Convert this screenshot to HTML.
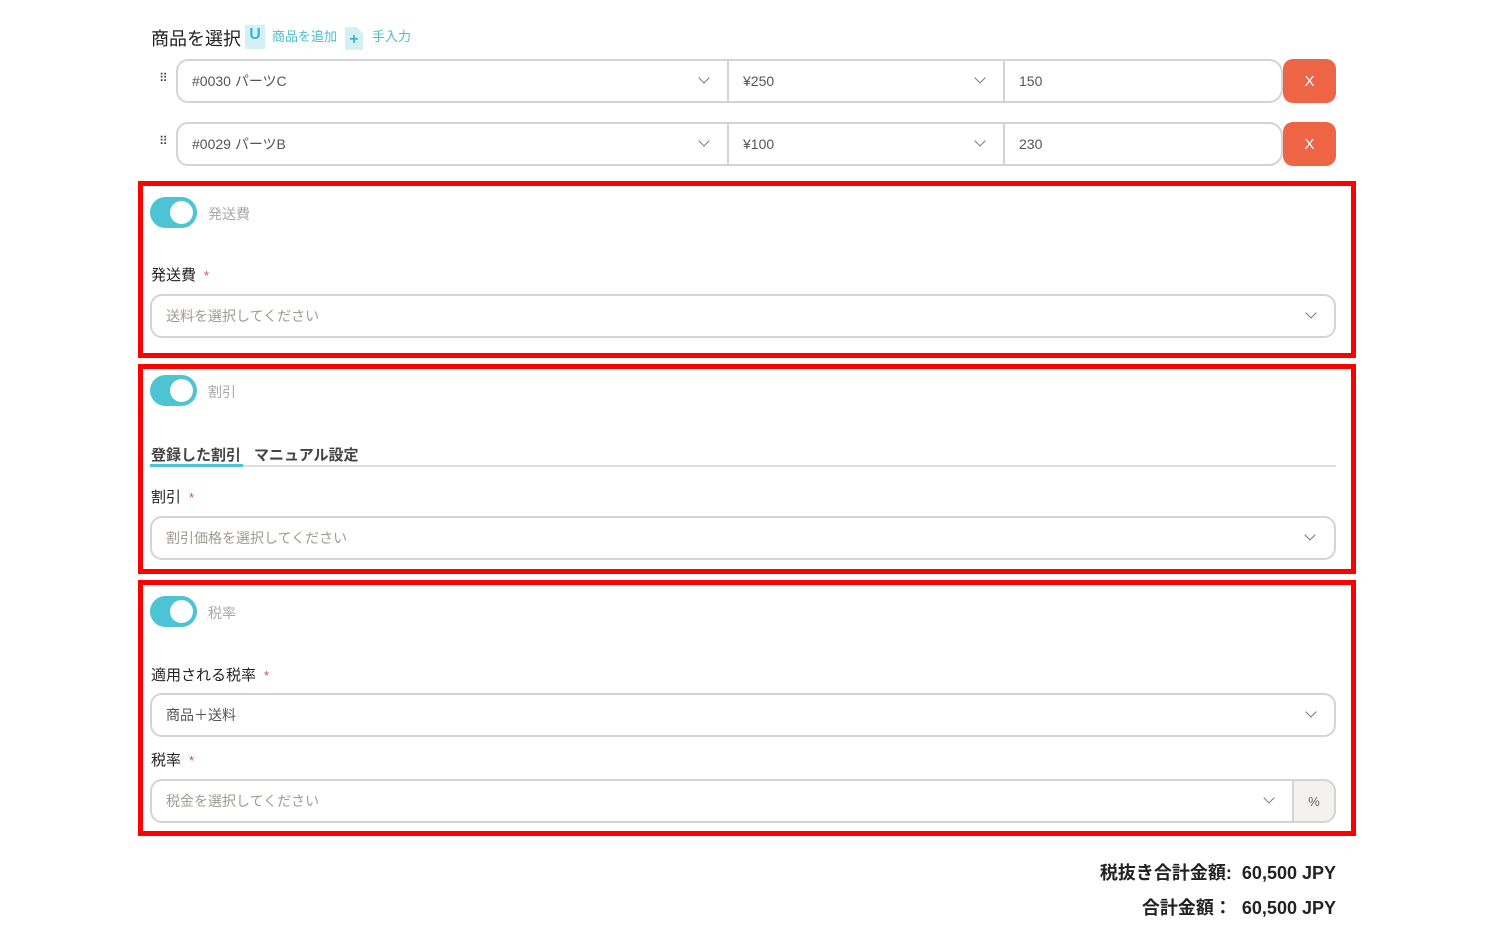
<!DOCTYPE html>
<html><head><meta charset="utf-8">
<style>
*{box-sizing:border-box;margin:0;padding:0}
body{width:1500px;height:948px;background:#fff;position:relative;overflow:hidden;font-family:"Liberation Sans","Noto Sans CJK JP",sans-serif;color:#333}
.a{position:absolute}
.inp{position:absolute;border:2px solid #d4d4d4;background:#fff;font-size:14px;color:#555;display:flex;align-items:center;padding-left:14px}
.chev{position:absolute;width:8px;height:8px;border-right:1.6px solid #777;border-bottom:1.6px solid #777;transform:rotate(45deg)}
.ph{color:#a09a92}
.red{position:absolute;border:5px solid #f00;left:138px;width:1218px}
.tog{position:absolute;left:150px;width:47px;height:31px;border-radius:16px;background:#4cc4d4}
.tog::after{content:"";position:absolute;right:4px;top:4px;width:23px;height:23px;border-radius:50%;background:#fff}
.tl{position:absolute;left:208px;font-size:14px;color:#aaa}
.lbl{position:absolute;left:151px;font-size:15px;color:#222}
.lbl b{color:#e04848;font-weight:normal;margin-left:8px;font-size:13px}
.sel{left:150px;width:1186px;height:44px;border-radius:12px}
.x{position:absolute;left:1283px;width:53px;height:44px;border-radius:10px;background:#ee6545;color:#fff;font-size:15px;display:flex;align-items:center;justify-content:center}
.dots{position:absolute;left:159px;font-size:12px;color:#444;letter-spacing:-1px}
</style></head><body>

<div class="a" style="left:151px;top:25px;font-size:18px;color:#222">商品を選択</div>
<div class="a" style="left:245px;top:25px;width:20px;height:24px;background:#d5f0f4;color:#3bb8cc;font-size:16px;font-weight:bold;text-align:center;line-height:20px">U</div>
<div class="a" style="left:272px;top:26px;font-size:13px;color:#4cbfd0">商品を追加</div>
<div class="a" style="left:345px;top:27px;width:18px;height:23px;background:#d5f0f4;clip-path:polygon(0 0,65% 0,100% 28%,100% 100%,0 100%);color:#3bb8cc;font-size:16px;font-weight:bold;text-align:center;line-height:26px">+</div>
<div class="a" style="left:372px;top:26px;font-size:13px;color:#4cbfd0">手入力</div>

<div class="dots" style="top:71px">⠿</div>
<div class="inp" style="left:176px;top:59px;width:553px;height:44px;border-radius:12px 0 0 12px">#0030 パーツC</div>
<div class="chev" style="left:700px;top:74px"></div>
<div class="inp" style="left:727px;top:59px;width:278px;height:44px;border-radius:0">¥250</div>
<div class="chev" style="left:976px;top:74px"></div>
<div class="inp" style="left:1003px;top:59px;width:280px;height:44px;border-radius:0 14px 14px 0">150</div>
<div class="x" style="top:59px">X</div>

<div class="dots" style="top:134px">⠿</div>
<div class="inp" style="left:176px;top:122px;width:553px;height:44px;border-radius:12px 0 0 12px">#0029 パーツB</div>
<div class="chev" style="left:700px;top:137px"></div>
<div class="inp" style="left:727px;top:122px;width:278px;height:44px;border-radius:0">¥100</div>
<div class="chev" style="left:976px;top:137px"></div>
<div class="inp" style="left:1003px;top:122px;width:280px;height:44px;border-radius:0 14px 14px 0">230</div>
<div class="x" style="top:122px">X</div>

<div class="red" style="top:181px;height:177px"></div>
<div class="tog" style="top:197px"></div>
<div class="tl" style="top:204px">発送費</div>
<div class="lbl" style="top:264px">発送費<b>*</b></div>
<div class="inp sel" style="top:294px"><span class="ph">送料を選択してください</span></div>
<div class="chev" style="left:1307px;top:309px"></div>

<div class="red" style="top:364px;height:210px"></div>
<div class="tog" style="top:375px"></div>
<div class="tl" style="top:382px">割引</div>
<div class="a" style="left:151px;top:444px;font-size:15px;color:#444;font-weight:bold">登録した割引</div>
<div class="a" style="left:254px;top:444px;font-size:15px;color:#444;font-weight:bold">マニュアル設定</div>
<div class="a" style="left:150px;top:465px;width:1186px;height:2px;background:#ddd"></div>
<div class="a" style="left:150px;top:464px;width:93px;height:3px;background:#4cc4d4"></div>
<div class="lbl" style="top:486px">割引<b>*</b></div>
<div class="inp sel" style="top:516px"><span class="ph">割引価格を選択してください</span></div>
<div class="chev" style="left:1306px;top:531px"></div>

<div class="red" style="top:580px;height:256px"></div>
<div class="tog" style="top:596px"></div>
<div class="tl" style="top:603px">税率</div>
<div class="lbl" style="top:664px">適用される税率<b>*</b></div>
<div class="inp sel" style="top:693px">商品＋送料</div>
<div class="chev" style="left:1307px;top:708px"></div>
<div class="lbl" style="top:749px">税率<b>*</b></div>
<div class="inp" style="left:150px;top:779px;width:1144px;height:44px;border-radius:12px 0 0 12px"><span class="ph">税金を選択してください</span></div>
<div class="chev" style="left:1265px;top:794px"></div>
<div class="inp" style="left:1292px;top:779px;width:44px;height:44px;border-radius:0 12px 12px 0;background:#f3f2ee;justify-content:center;padding:0;font-size:13px;color:#666">%</div>

<div class="a" style="right:164px;top:859px;font-size:18px;font-weight:bold;color:#222">税抜き合計金額:&nbsp; 60,500 JPY</div>
<div class="a" style="right:164px;top:894px;font-size:18px;font-weight:bold;color:#222">合計金額：&nbsp; 60,500 JPY</div>
</body></html>
